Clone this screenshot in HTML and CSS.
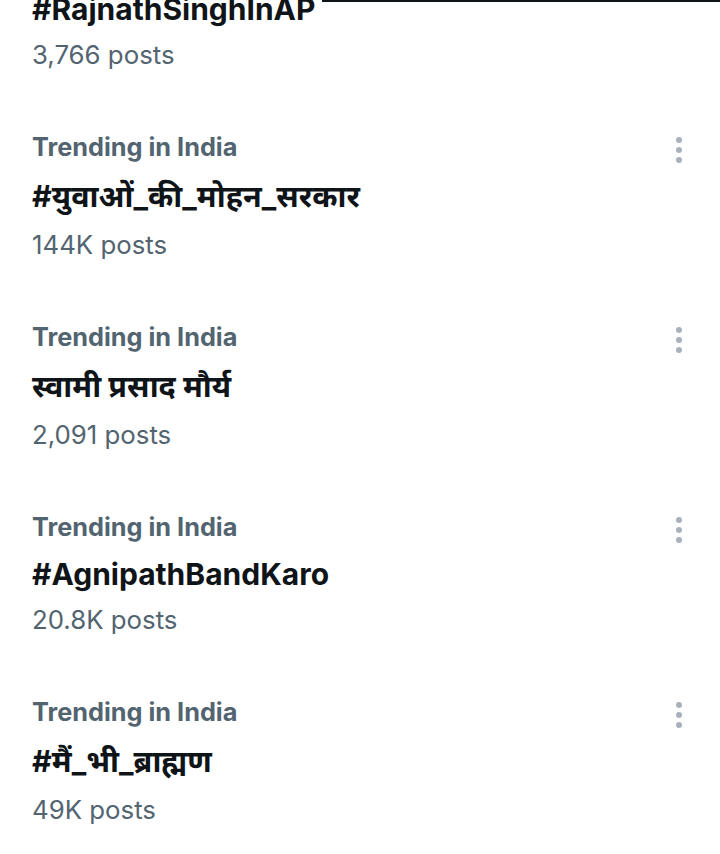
FILE: index.html
```html
<!DOCTYPE html>
<html lang="en">
<head>
<meta charset="utf-8">
<link rel="stylesheet" href="styles.css">
</head>
<body>
<div class="topline"></div>
<div class="list">
  <div class="item">
    <div class="label">Trending in India</div>
    <div class="title">#RajnathSinghInAP</div>
    <div class="posts">3,766 posts</div>
  </div>
  <div class="item">
    <div class="label">Trending in India</div>
    <div class="title hi">#युवाओं_की_मोहन_सरकार</div>
    <div class="posts">144K posts</div>
    <div class="more"><span></span><span></span><span></span></div>
  </div>
  <div class="item">
    <div class="label">Trending in India</div>
    <div class="title hi">स्वामी प्रसाद मौर्य</div>
    <div class="posts">2,091 posts</div>
    <div class="more"><span></span><span></span><span></span></div>
  </div>
  <div class="item">
    <div class="label">Trending in India</div>
    <div class="title">#AgnipathBandKaro</div>
    <div class="posts">20.8K posts</div>
    <div class="more"><span></span><span></span><span></span></div>
  </div>
  <div class="item">
    <div class="label">Trending in India</div>
    <div class="title hi">#मैं_भी_ब्राह्मण</div>
    <div class="posts">49K posts</div>
    <div class="more"><span></span><span></span><span></span></div>
  </div>
</div>
</body>
</html>
```
FILE: styles.css
```css
html, body {
  margin: 0;
  padding: 0;
  background: #ffffff;
}
body {
  width: 720px;
  height: 854px;
  overflow: hidden;
  position: relative;
  font-family: Inter, "Noto Sans Devanagari", "Lohit Devanagari", "FreeSans", "Noto Sans", sans-serif;
}
.topline {
  position: absolute;
  top: 0;
  left: 322px;
  right: 0;
  height: 2px;
  background: #0f1419;
  z-index: 2;
}
.list {
  margin-top: -84px;
  display: flex;
  flex-direction: column;
}
.item {
  position: relative;
  padding: 26px 60px 26px 32px;
  display: flex;
  flex-direction: column;
}
.label {
  font-size: 25.3px;
  line-height: 40px;
  font-weight: 700;
  color: #536471;
}
.title {
  font-size: 30px;
  line-height: 50px;
  font-weight: 700;
  color: #0f1419;
  margin: 2px 0 1px;
}
.title.hi {
  font-size: 30.5px;
  line-height: 55px;
  margin: 1px 0 2px;
}
.posts {
  font-size: 25.8px;
  line-height: 40px;
  font-weight: 400;
  color: #536471;
}
.more {
  position: absolute;
  top: 36px;
  left: 676px;
  display: flex;
  flex-direction: column;
  gap: 4px;
}
.more span {
  width: 6px;
  height: 6px;
  border-radius: 50%;
  background: #a9b2bb;
}
```
